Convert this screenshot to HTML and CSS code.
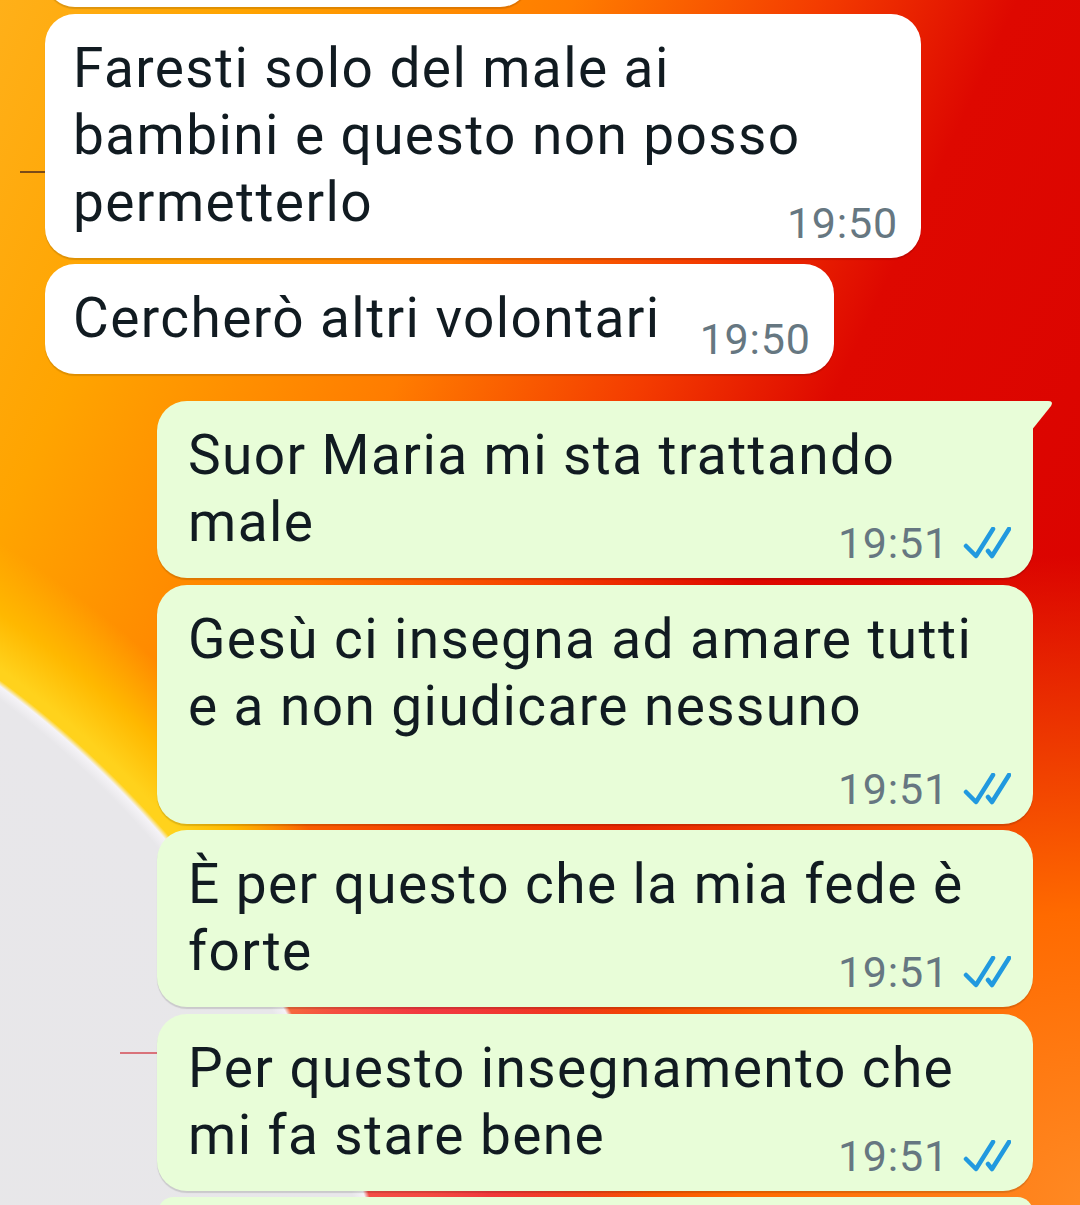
FILE: index.html
```html
<!DOCTYPE html>
<html lang="it">
<head>
    <meta charset="UTF-8">
    <meta name="viewport" content="width=device-width, initial-scale=1.0">
    <title>Chat</title>
    <link rel="stylesheet" href="styles.css">
</head>
<body>

    <div class="chat">
        <div class="bubble in stub"></div>

        <div class="bubble in">
            <p class="text">Faresti solo del male ai bambini e questo non posso permetterlo</p>
            <div class="meta"><span class="time">19:50</span></div>
        </div>

        <div class="bubble in inline">
            <p class="text">Cercherò altri volontari</p>
            <div class="meta"><span class="time">19:50</span></div>
        </div>

        <div class="bubble out first">
            <p class="text">Suor Maria mi sta trattando male</p>
            <div class="meta">
                <span class="time">19:51</span>
                <svg class="ticks" viewBox="0 0 48 32"><path d="M3 19 L13 29 L30 2 M25 24 L29 29 L46 2"/></svg>
            </div>
        </div>

        <div class="bubble out">
            <p class="text">Gesù ci insegna ad amare tutti e a non giudicare nessuno</p>
            <div class="meta below">
                <span class="time">19:51</span>
                <svg class="ticks" viewBox="0 0 48 32"><path d="M3 19 L13 29 L30 2 M25 24 L29 29 L46 2"/></svg>
            </div>
        </div>

        <div class="bubble out">
            <p class="text">È per questo che la mia fede è forte</p>
            <div class="meta">
                <span class="time">19:51</span>
                <svg class="ticks" viewBox="0 0 48 32"><path d="M3 19 L13 29 L30 2 M25 24 L29 29 L46 2"/></svg>
            </div>
        </div>

        <div class="bubble out">
            <p class="text">Per questo insegnamento che mi fa stare bene</p>
            <div class="meta">
                <span class="time">19:51</span>
                <svg class="ticks" viewBox="0 0 48 32"><path d="M3 19 L13 29 L30 2 M25 24 L29 29 L46 2"/></svg>
            </div>
        </div>

        <div class="bubble out stub-end"></div>
    </div>

</body>
</html>
```

FILE: styles.css
```css
body {
    margin: 0;
    height: 1205px;
    overflow: hidden;
    font-family: Roboto, "Noto Sans", sans-serif;
    background:
        linear-gradient(#7b4b18, #7b4b18) 20px 171px / 26px 2px no-repeat,
        linear-gradient(#d9727a, #d9727a) 120px 1052px / 38px 2px no-repeat,
        radial-gradient(circle at -600px 1500px, #e7e7e7 0, #e8e7ea 1000px, #f5f3f7 1011px, rgba(245, 243, 247, 0) 1016px),
        radial-gradient(ellipse 280px 240px at 390px 1110px, #f23a4a 0%, rgba(242, 58, 74, 0.85) 45%, rgba(242, 58, 74, 0) 100%),
        radial-gradient(circle at -600px 1500px, #ffd21c 0, #ffd21c 1025px, #ffb800 1070px, rgba(255, 170, 0, 0) 1130px),
        radial-gradient(ellipse 800px 650px at 1100px 1205px, #ff8a24 0%, #ff6a00 45%, rgba(255, 100, 0, 0) 100%),
        linear-gradient(115deg, #ffb019 0%, #ffa400 15%, #ff7c00 35%, #f43c00 50%, #de0800 62%, #d90000 100%);
    background-color: #d90000;
}

.chat {
    display: flex;
    flex-direction: column;
    gap: 6.5px;
    padding: 0 47px 0 45px;
}

.bubble {
    box-sizing: border-box;
    width: fit-content;
    max-width: 876px;
    padding: 21px 23px 10px 28px;
    border-radius: 30px;
    box-shadow: 0 2px 1px rgba(0, 0, 0, 0.13);
}

.in {
    align-self: flex-start;
    background-color: #ffffff;
}

.out {
    align-self: flex-end;
    padding-left: 31px;
    padding-right: 22px;
    background-color: #e8fdd8;
}

.stub {
    width: 485px;
    height: 60px;
    margin-top: -53px;
}

.stub-end {
    width: 875px;
    height: 12px;
}

.out.first {
    position: relative;
    margin-top: 20.5px;
    border-top-right-radius: 0;
}

.out.first::after {
    content: "";
    position: absolute;
    top: 0;
    right: -20px;
    width: 22px;
    height: 30px;
    background-color: #e8fdd8;
    clip-path: path('M0 0 H17 Q23 0 20 5 L0 30 Z');
}

.text {
    margin: 0;
    padding-right: 31px;
    font-size: 55px;
    line-height: 67px;
    letter-spacing: 1.4px;
    color: #111b21;
}

.meta {
    display: flex;
    justify-content: flex-end;
    align-items: center;
    gap: 14px;
    margin-top: -38px;
    font-size: 43px;
    line-height: 50px;
    letter-spacing: 0.8px;
    color: #667781;
}

.meta.below {
    margin-top: 24px;
}

.inline {
    display: flex;
    align-items: flex-end;
    gap: 8px;
}

.inline .text {
    margin-bottom: 12px;
}

.inline .meta {
    margin-top: 0;
}

.ticks {
    width: 48px;
    height: 32px;
    fill: none;
    stroke: #2199df;
    stroke-width: 4.5;
    stroke-linecap: round;
    stroke-linejoin: round;
}
```
